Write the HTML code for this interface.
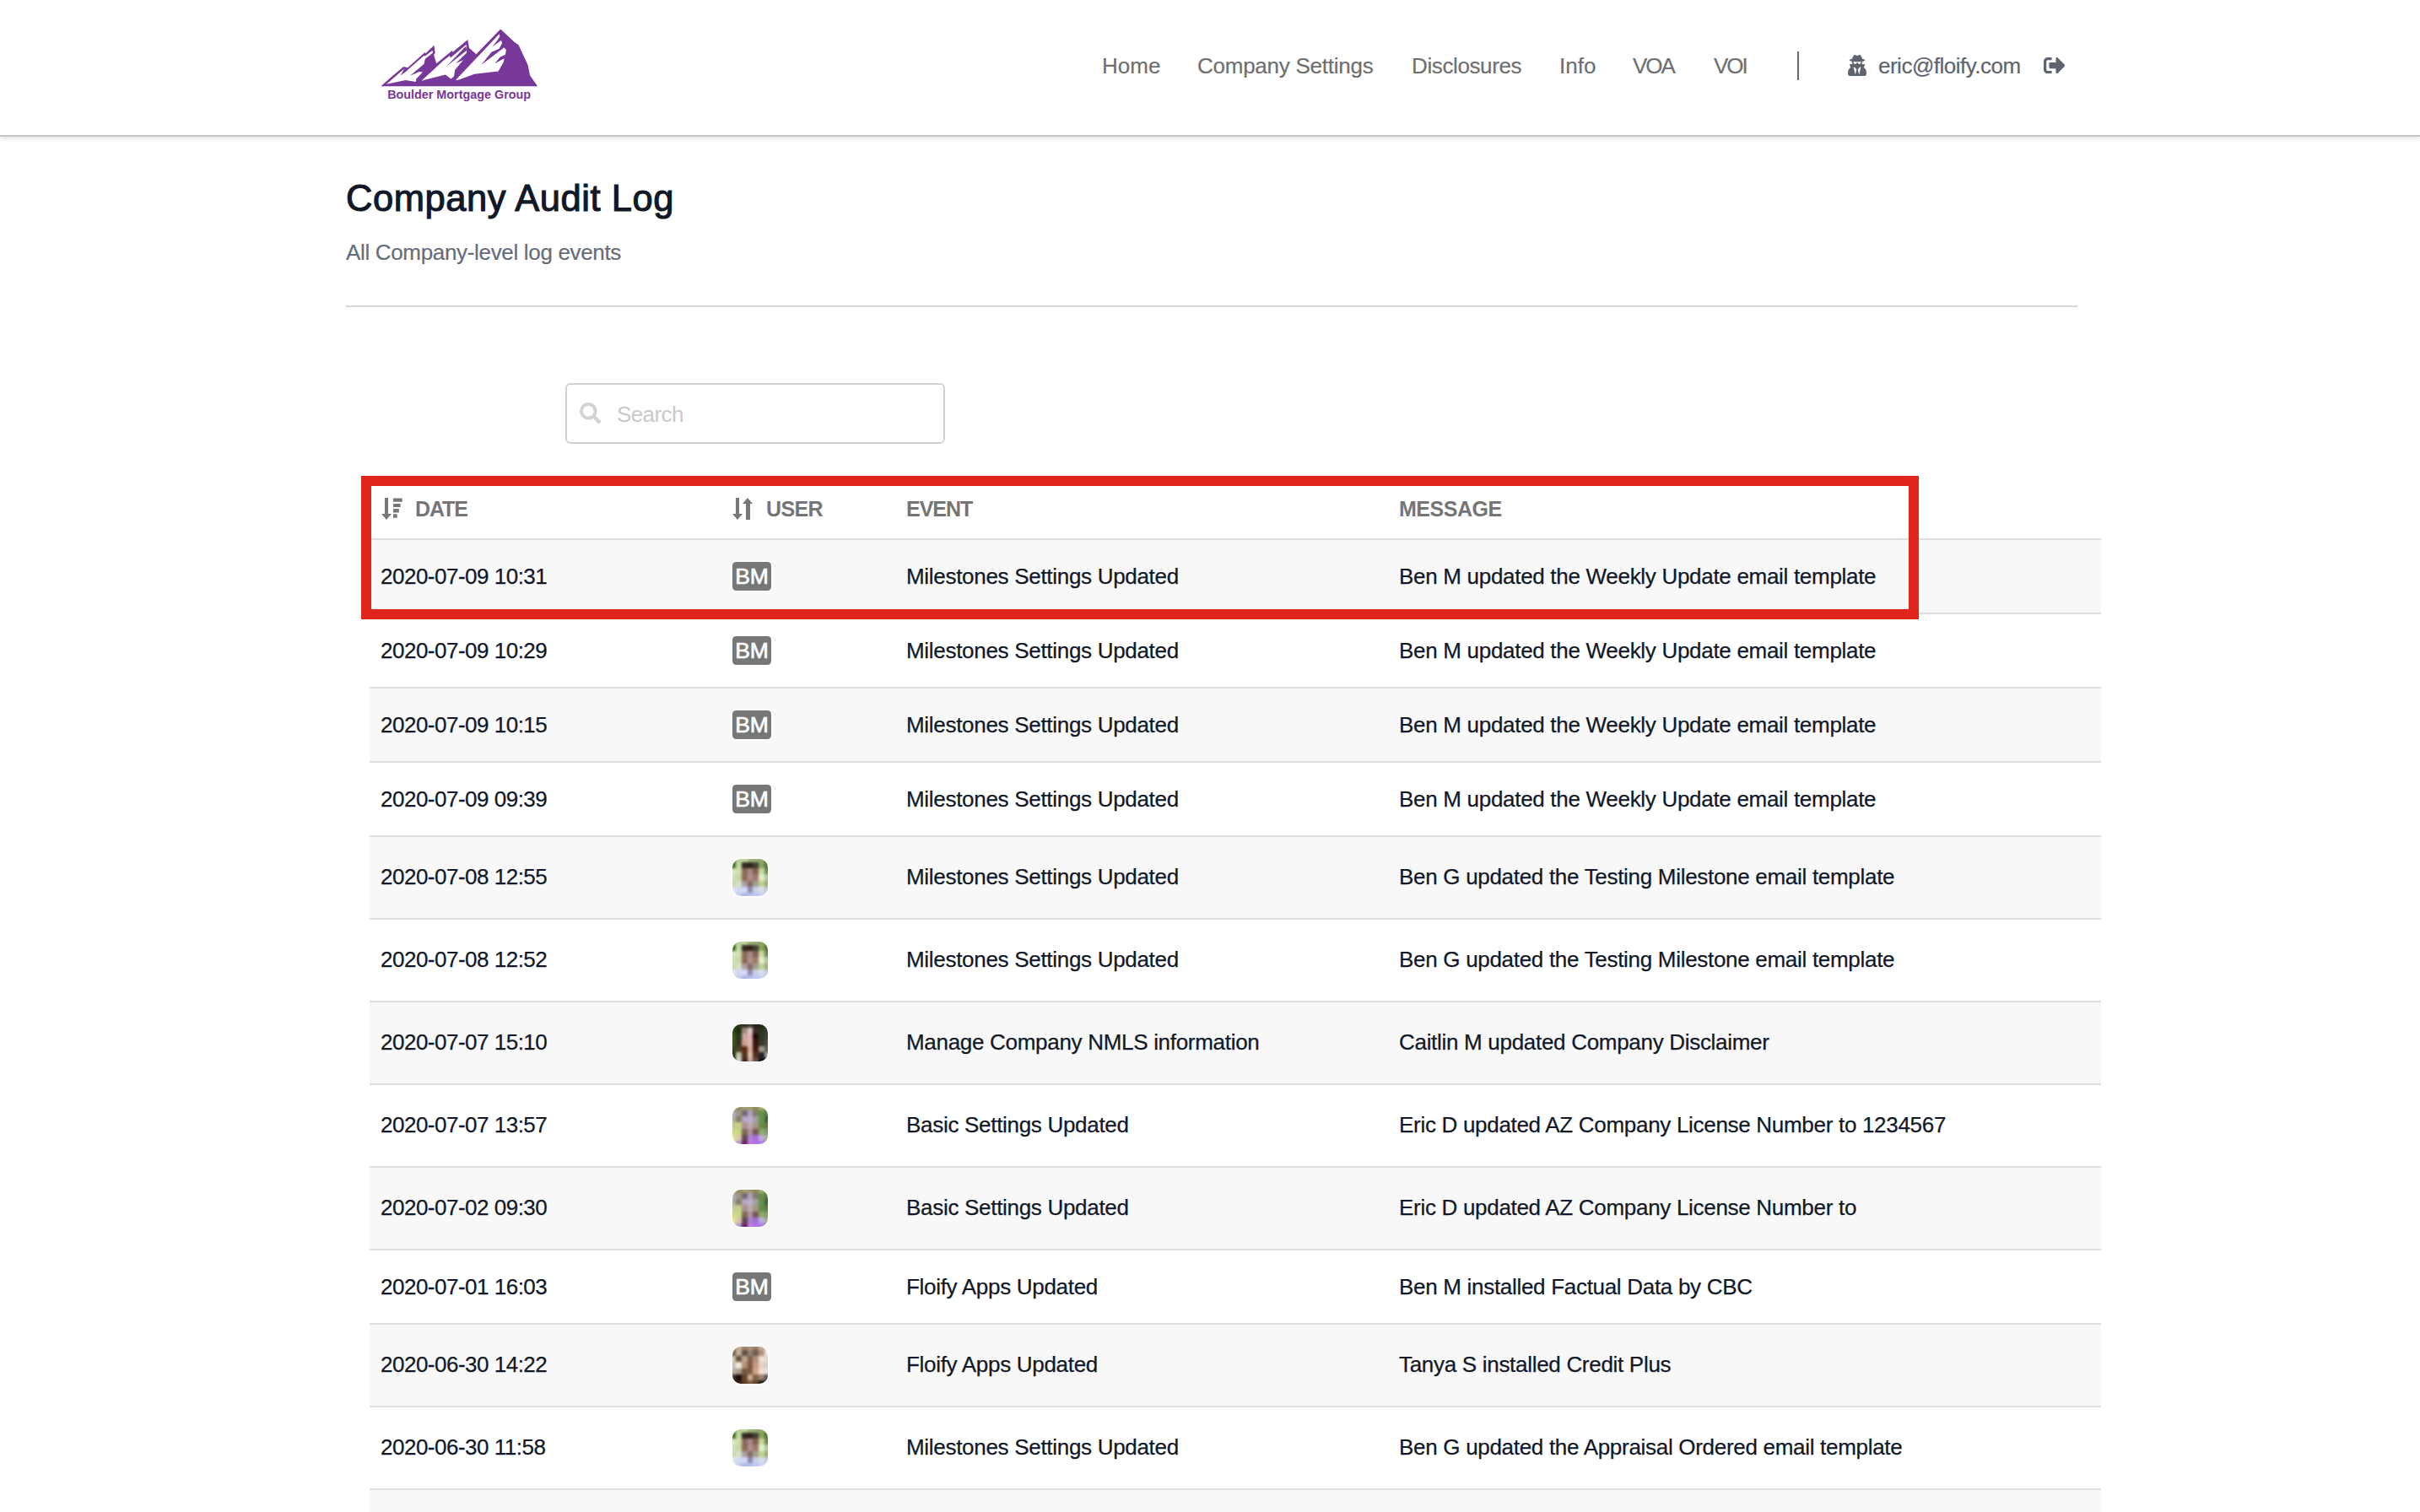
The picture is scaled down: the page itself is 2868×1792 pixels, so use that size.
<!DOCTYPE html>
<html><head><meta charset="utf-8">
<style>
*{margin:0;padding:0;box-sizing:border-box}
html,body{width:2868px;height:1792px;overflow:hidden;background:#fff;font-family:"Liberation Sans",sans-serif}
.hdr{position:absolute;left:0;top:0;width:2868px;height:162px;background:#fff;border-bottom:2px solid #c6c6c6;box-shadow:0 2px 6px rgba(0,0,0,0.13)}
.logo{position:absolute;left:440px;top:20px;width:220px;height:110px}
.nav{position:absolute;top:58px;height:40px;line-height:40px;font-size:26px;color:#6f6f6f;white-space:nowrap;-webkit-text-stroke:0.2px currentColor}
.divv{position:absolute;left:2130px;top:61px;width:2px;height:34px;background:#6a6a6a}
.email{color:#5d6470}
h1{position:absolute;left:410px;top:207px;font-size:43.5px;line-height:56px;letter-spacing:0.55px;font-weight:normal;-webkit-text-stroke:1.1px #111827;color:#111827;white-space:nowrap}
.sub{position:absolute;left:410px;top:280.5px;font-size:26px;line-height:36px;letter-spacing:-0.33px;color:#656d7a;white-space:nowrap;-webkit-text-stroke:0.2px currentColor}
.hr{position:absolute;left:410px;top:362px;width:2052px;height:2px;background:#d9d9d9}
.search{position:absolute;left:670px;top:454px;width:450px;height:72px;border:2px solid #d2d2d2;border-radius:6px}
.search .ph{position:absolute;left:59px;top:17px;line-height:36px;font-size:26px;letter-spacing:-0.6px;color:#c9c9c9}
.th{position:absolute;left:438px;top:568px;width:2052px;height:72px;border-bottom:2px solid #dedede}
.th div{position:absolute;top:0;line-height:70px;font-size:25px;font-weight:bold;color:#757575;white-space:nowrap}
.row{position:absolute;left:438px;width:2052px;border-bottom:2px solid #dedede;background:#fff;box-sizing:content-box}
.row.g{background:#f8f8f8}
.row>div{position:absolute;top:0;height:100%;display:flex;align-items:center;font-size:26px;letter-spacing:-0.3px;color:#111827;white-space:nowrap}
.row>.c1{letter-spacing:-0.5px}
.row.a>div{top:-1px}.row.a>div.c2{top:0}
.row>div{-webkit-text-stroke:0.25px #111827}
.c1{left:13px}.c2{left:430px}.c3{left:636px}.c4{left:1220px}
.bm{display:inline-block;width:46px;height:34px;line-height:35px;border-radius:4.5px;background:#777;color:#fff;font-size:26.5px;letter-spacing:0;text-align:center;-webkit-text-stroke:0.7px #fff;box-shadow:0 0 0 1px #fff}
.av{display:inline-block;position:relative;width:42px;height:44px;border-radius:10px;overflow:hidden;box-shadow:0 0 0 1.5px #fff}
.avg{position:absolute;left:-3px;top:-3px;width:48px;height:50px;display:grid;grid-template-columns:repeat(7,1fr);grid-template-rows:repeat(7,1fr);filter:blur(1.8px)}
.avg i{display:block}
.red{position:absolute;left:428px;top:564px;width:1846px;height:170px;border:12px solid #e0261c}
@media (max-width:1600px){html{zoom:0.5}}
</style></head><body>
<div class="hdr">
<svg class="logo" viewBox="0 0 2420 1210"><path fill="#77389a" d="M125,905 L255,790 L420,650 L475,662 L700,462 L705,478 L820,372 L832,470 L815,495 L850,608 L1060,435 L1058,462 L1258,297 L1275,405 L1368,488 L1685,160 L1868,330 L1920,365 L2040,625 L2070,765 L2168,905 Z"/><path fill="#fff" d="M198,876 L426,678 L482,686 L686,506 L702,512 L798,436 L804,468 L702,548 L688,612 L506,768 L626,716 L670,720 L586,808 L582,848 L446,824 Z M655,832 L935,576 L1022,506 L1033,534 L1236,364 L1243,375 L1243,473 L1197,565 L1092,691 L1079,774 L1040,809 L966,753 Z M1099,825 L1669,222 L1677,252 L1640,310 L1577,391 L1694,304 L1705,345 L1667,416 L1568,459 L1432,626 L1732,399 L1759,432 L1748,492 L1677,525 L1612,609 L1732,541 L1727,585 L1656,710 L1345,746 L1143,819 Z"/><path fill="#77389a" d="M382,764 L430,680 L486,688 Z M979,646 L1236,379 L1243,438 Z M1101,604 L1243,471 L1243,499 L1197,565 Z"/><text x="1145" y="1070" text-anchor="middle" font-family="Liberation Sans" font-weight="bold" font-size="158" fill="#77389a">Boulder Mortgage Group</text></svg>
<div class="nav" style="left:1306px">Home</div>
<div class="nav" style="left:1419px;letter-spacing:-0.25px">Company Settings</div>
<div class="nav" style="left:1673px;letter-spacing:-0.39px">Disclosures</div>
<div class="nav" style="left:1848px">Info</div>
<div class="nav" style="left:1935px;letter-spacing:-2px">VOA</div>
<div class="nav" style="left:2031px;letter-spacing:-2px">VOI</div>
<div class="divv"></div>
<svg style="position:absolute;left:2190px;top:65px" width="22" height="25" viewBox="0 0 448 512"><path fill="#5d6470" d="M383.9 308.3l23.9-62.6c4-10.5-3.7-21.7-15-21.7h-58.5c11-18.9 17.8-40.6 17.8-64v-.3c39.2-7.8 64-19.1 64-31.7 0-13.3-27.3-25.1-70.1-33-9.2-32.8-27-65.8-40.6-82.8-9.5-11.9-25.9-15.6-39.5-8.8l-27.6 13.8c-9 4.5-19.6 4.5-28.6 0L182.1 3.4c-13.6-6.8-30-3.1-39.5 8.8-13.500 17-31.4 50-40.6 82.8-42.7 7.9-70 19.7-70 33 0 12.6 24.8 23.9 64 31.7v.3c0 23.4 6.8 45.1 17.8 64H56.300c-11.5 0-19.2 11.7-14.7 22.3l25.8 60.2C27.3 329.8 0 372.7 0 422.4v44.8C0 491.900 20.1 512 44.8 512h358.4c24.7 0 44.8-20.1 44.8-44.8v-44.8c0-48.4-25.8-90.4-64.1-114.1zM176 480l-41.6-192 49.6 32 24 40-32 120zm96 0l-32-120 24-40 49.6-32L272 480zm41.7-298.5c-3.9 11.9-7 24.6-16.5 33.4-10.1 9.3-48 22.4-64-25-2.8-8.4-15.4-8.4-18.3 0-17 50.2-56 32.4-64 25-9.5-8.8-12.7-21.5-16.5-33.4-.8-2.5-6.3-5.700-6.3-5.8v-10.8c28.3 3.6 61 5.8 96 5.8s67.7-2.1 96-5.8v10.8c-.1.1-5.6 3.2-6.4 5.8z"/></svg>
<div class="nav email" style="left:2226px;letter-spacing:-0.5px">eric@floify.com</div>
<svg style="position:absolute;left:2422px;top:68px" width="25.3" height="19.3" viewBox="0 64 504 384"><path fill="#5d6470" d="M497 273L329 441c-15 15-41 4.5-41-17v-96H152c-13.3 0-24-10.7-24-24v-96c0-13.3 10.7-24 24-24h136V88c0-21.4 25.9-32 41-17l168 168c9.3 9.4 9.3 24.6 0 34zM192 436v-40c0-6.6-5.4-12-12-12H96c-17.7 0-32-14.3-32-32V160c0-17.7 14.3-32 32-32h84c6.6 0 12-5.4 12-12V76c0-6.6-5.4-12-12-12H96c-53 0-96 43-96 96v192c0 53 43 96 96 96h84c6.6 0 12-5.4 12-12z"/></svg>
</div>
<h1>Company Audit Log</h1>
<div class="sub">All Company-level log events</div>
<div class="hr"></div>
<div class="search"><svg style="position:absolute;left:15px;top:21px" width="25.3" height="25.3" viewBox="0 0 512 512"><path fill="#d3d3d3" d="M505 442.7L405.3 343c-4.5-4.5-10.6-7-17-7H372c27.6-35.3 44-79.7 44-128C416 93.1 322.9 0 208 0S0 93.1 0 208s93.1 208 208 208c48.3 0 92.7-16.4 128-44v16.3c0 6.4 2.5 12.5 7 17l99.7 99.7c9.4 9.4 24.6 9.4 33.9 0l28.3-28.3c9.4-9.4 9.4-24.6.1-34zM208 336c-70.7 0-128-57.2-128-128 0-70.7 57.2-128 128-128 70.7 0 128 57.2 128 128 0 70.7-57.2 128-128 128z"/></svg><div class="ph">Search</div></div>
<div class="th">
<svg style="position:absolute;left:13px;top:22px" width="27" height="28" viewBox="0 0 27 28"><path fill="#777" d="M5,0 L9,0 L9,19 L13,19 L7,26 L1,19 L5,19 Z M15,0.5 L25.7,0.5 L25.7,4.7 L15,4.7 Z M15,7 L23.7,7 L23.7,11 L15,11 Z M15,13.1 L21.8,13.1 L21.8,17.6 L15,17.6 Z M15,19.3 L19.7,19.3 L19.7,23.8 L15,23.8 Z"/></svg>
<div style="left:54px;letter-spacing:-1.1px">DATE</div>
<svg style="position:absolute;left:430px;top:22px" width="26" height="28" viewBox="0 0 26 28"><path fill="#777" d="M4,0 L8,0 L8,19 L12,19 L6,26 L0,19 L4,19 Z M18,0 L24,7 L21,7 L21,26 L16,26 L16,7 L12,7 Z"/></svg>
<div style="left:470px;letter-spacing:-0.6px">USER</div>
<div style="left:636px;letter-spacing:-1px">EVENT</div>
<div style="left:1220px;letter-spacing:-0.47px">MESSAGE</div>
</div>
<div class="row g" style="top:640px;height:86px"><div class="c1">2020-07-09 10:31</div><div class="c2"><span class="bm">BM</span></div><div class="c3">Milestones Settings Updated</div><div class="c4">Ben M updated the Weekly Update email template</div></div>
<div class="row" style="top:728px;height:86px"><div class="c1">2020-07-09 10:29</div><div class="c2"><span class="bm">BM</span></div><div class="c3">Milestones Settings Updated</div><div class="c4">Ben M updated the Weekly Update email template</div></div>
<div class="row g" style="top:816px;height:86px"><div class="c1">2020-07-09 10:15</div><div class="c2"><span class="bm">BM</span></div><div class="c3">Milestones Settings Updated</div><div class="c4">Ben M updated the Weekly Update email template</div></div>
<div class="row" style="top:904px;height:86px"><div class="c1">2020-07-09 09:39</div><div class="c2"><span class="bm">BM</span></div><div class="c3">Milestones Settings Updated</div><div class="c4">Ben M updated the Weekly Update email template</div></div>
<div class="row g a" style="top:992px;height:96px"><div class="c1">2020-07-08 12:55</div><div class="c2"><span class="av"><span class="avg"><i style="background:#7aa050"></i><i style="background:#b8d098"></i><i style="background:#c0d8a0"></i><i style="background:#a0b880"></i><i style="background:#98b078"></i><i style="background:#90a868"></i><i style="background:#5a8a38"></i><i style="background:#3a6a20"></i><i style="background:#c0d8a0"></i><i style="background:#302820"></i><i style="background:#302018"></i><i style="background:#404030"></i><i style="background:#88a060"></i><i style="background:#507838"></i><i style="background:#d8e8c0"></i><i style="background:#d0e0b0"></i><i style="background:#8a6a5a"></i><i style="background:#a88888"></i><i style="background:#806050"></i><i style="background:#c8d8a0"></i><i style="background:#6a8a48"></i><i style="background:#d0e0b8"></i><i style="background:#c8d8a8"></i><i style="background:#906858"></i><i style="background:#b09090"></i><i style="background:#a07868"></i><i style="background:#e0f0c8"></i><i style="background:#b0c890"></i><i style="background:#c8d8b0"></i><i style="background:#d8e0c8"></i><i style="background:#a8a0a0"></i><i style="background:#8a6a60"></i><i style="background:#a0a090"></i><i style="background:#c0d098"></i><i style="background:#98b070"></i><i style="background:#e0e8f0"></i><i style="background:#d0d8f0"></i><i style="background:#d8d8f8"></i><i style="background:#8a8ab0"></i><i style="background:#c8d0e8"></i><i style="background:#d8e0e8"></i><i style="background:#c0c8e0"></i><i style="background:#e0e8ff"></i><i style="background:#c8d0f0"></i><i style="background:#b0b8e0"></i><i style="background:#b8c0f0"></i><i style="background:#c0c8f0"></i><i style="background:#c8d0f8"></i><i style="background:#d0d8f8"></i></span></span></div><div class="c3">Milestones Settings Updated</div><div class="c4">Ben G updated the Testing Milestone email template</div></div>
<div class="row a" style="top:1090px;height:96px"><div class="c1">2020-07-08 12:52</div><div class="c2"><span class="av"><span class="avg"><i style="background:#7aa050"></i><i style="background:#b8d098"></i><i style="background:#c0d8a0"></i><i style="background:#a0b880"></i><i style="background:#98b078"></i><i style="background:#90a868"></i><i style="background:#5a8a38"></i><i style="background:#3a6a20"></i><i style="background:#c0d8a0"></i><i style="background:#302820"></i><i style="background:#302018"></i><i style="background:#404030"></i><i style="background:#88a060"></i><i style="background:#507838"></i><i style="background:#d8e8c0"></i><i style="background:#d0e0b0"></i><i style="background:#8a6a5a"></i><i style="background:#a88888"></i><i style="background:#806050"></i><i style="background:#c8d8a0"></i><i style="background:#6a8a48"></i><i style="background:#d0e0b8"></i><i style="background:#c8d8a8"></i><i style="background:#906858"></i><i style="background:#b09090"></i><i style="background:#a07868"></i><i style="background:#e0f0c8"></i><i style="background:#b0c890"></i><i style="background:#c8d8b0"></i><i style="background:#d8e0c8"></i><i style="background:#a8a0a0"></i><i style="background:#8a6a60"></i><i style="background:#a0a090"></i><i style="background:#c0d098"></i><i style="background:#98b070"></i><i style="background:#e0e8f0"></i><i style="background:#d0d8f0"></i><i style="background:#d8d8f8"></i><i style="background:#8a8ab0"></i><i style="background:#c8d0e8"></i><i style="background:#d8e0e8"></i><i style="background:#c0c8e0"></i><i style="background:#e0e8ff"></i><i style="background:#c8d0f0"></i><i style="background:#b0b8e0"></i><i style="background:#b8c0f0"></i><i style="background:#c0c8f0"></i><i style="background:#c8d0f8"></i><i style="background:#d0d8f8"></i></span></span></div><div class="c3">Milestones Settings Updated</div><div class="c4">Ben G updated the Testing Milestone email template</div></div>
<div class="row g a" style="top:1188px;height:96px"><div class="c1">2020-07-07 15:10</div><div class="c2"><span class="av"><span class="avg"><i style="background:#1a3a10"></i><i style="background:#2a3a18"></i><i style="background:#303020"></i><i style="background:#404038"></i><i style="background:#202818"></i><i style="background:#1a2a10"></i><i style="background:#304030"></i><i style="background:#2a4a18"></i><i style="background:#203010"></i><i style="background:#a08878"></i><i style="background:#e0c8c8"></i><i style="background:#3a2a20"></i><i style="background:#2a3420"></i><i style="background:#3a4030"></i><i style="background:#3a5a20"></i><i style="background:#283818"></i><i style="background:#c8a8a0"></i><i style="background:#e0b0b8"></i><i style="background:#200808"></i><i style="background:#303828"></i><i style="background:#404838"></i><i style="background:#3a5a20"></i><i style="background:#3a3020"></i><i style="background:#d0a098"></i><i style="background:#e0b8b0"></i><i style="background:#301810"></i><i style="background:#383828"></i><i style="background:#505040"></i><i style="background:#304a18"></i><i style="background:#504028"></i><i style="background:#602818"></i><i style="background:#d8b0a0"></i><i style="background:#401810"></i><i style="background:#a09890"></i><i style="background:#606050"></i><i style="background:#203010"></i><i style="background:#c0c8b0"></i><i style="background:#503020"></i><i style="background:#e0c0a8"></i><i style="background:#503020"></i><i style="background:#202028"></i><i style="background:#a8a098"></i><i style="background:#203010"></i><i style="background:#d0d8c0"></i><i style="background:#402020"></i><i style="background:#c8a898"></i><i style="background:#705040"></i><i style="background:#101020"></i><i style="background:#181828"></i></span></span></div><div class="c3">Manage Company NMLS information</div><div class="c4">Caitlin M updated Company Disclaimer</div></div>
<div class="row a" style="top:1286px;height:96px"><div class="c1">2020-07-07 13:57</div><div class="c2"><span class="av"><span class="avg"><i style="background:#a0a878"></i><i style="background:#908860"></i><i style="background:#a0a070"></i><i style="background:#a09870"></i><i style="background:#908858"></i><i style="background:#a0b070"></i><i style="background:#90a860"></i><i style="background:#b8a8c0"></i><i style="background:#a09880"></i><i style="background:#706878"></i><i style="background:#b0a0c0"></i><i style="background:#808068"></i><i style="background:#6a8a50"></i><i style="background:#508040"></i><i style="background:#b0b0a0"></i><i style="background:#808068"></i><i style="background:#b8a8c8"></i><i style="background:#c0b0d0"></i><i style="background:#a0a0a0"></i><i style="background:#6a9050"></i><i style="background:#306828"></i><i style="background:#c0c8a0"></i><i style="background:#c8d080"></i><i style="background:#a89090"></i><i style="background:#c0a8b8"></i><i style="background:#a09880"></i><i style="background:#6a8a48"></i><i style="background:#5a8040"></i><i style="background:#d0d890"></i><i style="background:#c8d880"></i><i style="background:#806858"></i><i style="background:#b090a0"></i><i style="background:#705850"></i><i style="background:#90a870"></i><i style="background:#80a060"></i><i style="background:#e0e890"></i><i style="background:#d8c8b0"></i><i style="background:#604858"></i><i style="background:#b080d0"></i><i style="background:#a070d8"></i><i style="background:#c0a8e0"></i><i style="background:#a0b880"></i><i style="background:#d0d0c0"></i><i style="background:#b098d0"></i><i style="background:#702060"></i><i style="background:#c080e0"></i><i style="background:#b070e8"></i><i style="background:#b078e8"></i><i style="background:#a080e0"></i></span></span></div><div class="c3">Basic Settings Updated</div><div class="c4">Eric D updated AZ Company License Number to 1234567</div></div>
<div class="row g a" style="top:1384px;height:96px"><div class="c1">2020-07-02 09:30</div><div class="c2"><span class="av"><span class="avg"><i style="background:#a0a878"></i><i style="background:#908860"></i><i style="background:#a0a070"></i><i style="background:#a09870"></i><i style="background:#908858"></i><i style="background:#a0b070"></i><i style="background:#90a860"></i><i style="background:#b8a8c0"></i><i style="background:#a09880"></i><i style="background:#706878"></i><i style="background:#b0a0c0"></i><i style="background:#808068"></i><i style="background:#6a8a50"></i><i style="background:#508040"></i><i style="background:#b0b0a0"></i><i style="background:#808068"></i><i style="background:#b8a8c8"></i><i style="background:#c0b0d0"></i><i style="background:#a0a0a0"></i><i style="background:#6a9050"></i><i style="background:#306828"></i><i style="background:#c0c8a0"></i><i style="background:#c8d080"></i><i style="background:#a89090"></i><i style="background:#c0a8b8"></i><i style="background:#a09880"></i><i style="background:#6a8a48"></i><i style="background:#5a8040"></i><i style="background:#d0d890"></i><i style="background:#c8d880"></i><i style="background:#806858"></i><i style="background:#b090a0"></i><i style="background:#705850"></i><i style="background:#90a870"></i><i style="background:#80a060"></i><i style="background:#e0e890"></i><i style="background:#d8c8b0"></i><i style="background:#604858"></i><i style="background:#b080d0"></i><i style="background:#a070d8"></i><i style="background:#c0a8e0"></i><i style="background:#a0b880"></i><i style="background:#d0d0c0"></i><i style="background:#b098d0"></i><i style="background:#702060"></i><i style="background:#c080e0"></i><i style="background:#b070e8"></i><i style="background:#b078e8"></i><i style="background:#a080e0"></i></span></span></div><div class="c3">Basic Settings Updated</div><div class="c4">Eric D updated AZ Company License Number to</div></div>
<div class="row" style="top:1482px;height:86px"><div class="c1">2020-07-01 16:03</div><div class="c2"><span class="bm">BM</span></div><div class="c3">Floify Apps Updated</div><div class="c4">Ben M installed Factual Data by CBC</div></div>
<div class="row g a" style="top:1570px;height:96px"><div class="c1">2020-06-30 14:22</div><div class="c2"><span class="av"><span class="avg"><i style="background:#b08868"></i><i style="background:#c8a890"></i><i style="background:#a08870"></i><i style="background:#b09880"></i><i style="background:#a08068"></i><i style="background:#c0b098"></i><i style="background:#e0d8c8"></i><i style="background:#706050"></i><i style="background:#c0b098"></i><i style="background:#605040"></i><i style="background:#908070"></i><i style="background:#705a48"></i><i style="background:#b09080"></i><i style="background:#f0e8e0"></i><i style="background:#d0c8b8"></i><i style="background:#605040"></i><i style="background:#c0a890"></i><i style="background:#806048"></i><i style="background:#b09080"></i><i style="background:#f0e0d8"></i><i style="background:#e0d8d0"></i><i style="background:#c8c0b0"></i><i style="background:#f0e8d8"></i><i style="background:#b09070"></i><i style="background:#805840"></i><i style="background:#c09888"></i><i style="background:#e8d0c0"></i><i style="background:#d8d0c8"></i><i style="background:#b8b0a0"></i><i style="background:#a89888"></i><i style="background:#705840"></i><i style="background:#805a40"></i><i style="background:#d0a888"></i><i style="background:#f0e0d0"></i><i style="background:#e8e0d8"></i><i style="background:#403028"></i><i style="background:#180c08"></i><i style="background:#604830"></i><i style="background:#d0b090"></i><i style="background:#806048"></i><i style="background:#a08070"></i><i style="background:#505060"></i><i style="background:#403020"></i><i style="background:#302018"></i><i style="background:#604020"></i><i style="background:#806040"></i><i style="background:#604830"></i><i style="background:#201818"></i><i style="background:#303040"></i></span></span></div><div class="c3">Floify Apps Updated</div><div class="c4">Tanya S installed Credit Plus</div></div>
<div class="row a" style="top:1668px;height:96px"><div class="c1">2020-06-30 11:58</div><div class="c2"><span class="av"><span class="avg"><i style="background:#7aa050"></i><i style="background:#b8d098"></i><i style="background:#c0d8a0"></i><i style="background:#a0b880"></i><i style="background:#98b078"></i><i style="background:#90a868"></i><i style="background:#5a8a38"></i><i style="background:#3a6a20"></i><i style="background:#c0d8a0"></i><i style="background:#302820"></i><i style="background:#302018"></i><i style="background:#404030"></i><i style="background:#88a060"></i><i style="background:#507838"></i><i style="background:#d8e8c0"></i><i style="background:#d0e0b0"></i><i style="background:#8a6a5a"></i><i style="background:#a88888"></i><i style="background:#806050"></i><i style="background:#c8d8a0"></i><i style="background:#6a8a48"></i><i style="background:#d0e0b8"></i><i style="background:#c8d8a8"></i><i style="background:#906858"></i><i style="background:#b09090"></i><i style="background:#a07868"></i><i style="background:#e0f0c8"></i><i style="background:#b0c890"></i><i style="background:#c8d8b0"></i><i style="background:#d8e0c8"></i><i style="background:#a8a0a0"></i><i style="background:#8a6a60"></i><i style="background:#a0a090"></i><i style="background:#c0d098"></i><i style="background:#98b070"></i><i style="background:#e0e8f0"></i><i style="background:#d0d8f0"></i><i style="background:#d8d8f8"></i><i style="background:#8a8ab0"></i><i style="background:#c8d0e8"></i><i style="background:#d8e0e8"></i><i style="background:#c0c8e0"></i><i style="background:#e0e8ff"></i><i style="background:#c8d0f0"></i><i style="background:#b0b8e0"></i><i style="background:#b8c0f0"></i><i style="background:#c0c8f0"></i><i style="background:#c8d0f8"></i><i style="background:#d0d8f8"></i></span></span></div><div class="c3">Milestones Settings Updated</div><div class="c4">Ben G updated the Appraisal Ordered email template</div></div>
<div class="row g" style="top:1766px;height:200px"><div class="c1"></div><div class="c2"></div><div class="c3"></div><div class="c4"></div></div><div class="red"></div>
</body></html>
